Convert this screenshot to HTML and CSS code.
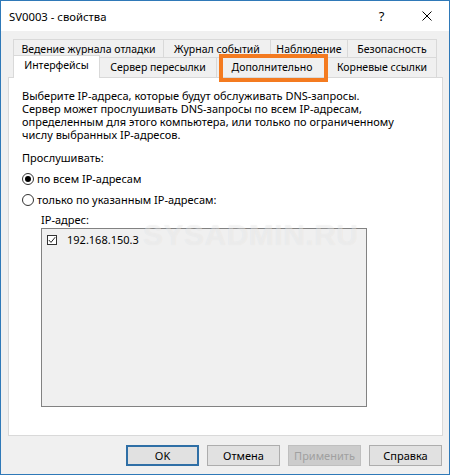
FILE: index.html
```html
<!DOCTYPE html>
<html lang="ru">
<head>
<meta charset="utf-8">
<title>SV0003 - свойства</title>
<link rel="stylesheet" href="styles.css">
</head>
<body>
<div class="window">
  <div class="titlebar">
    <span class="title">SV0003 - свойства</span>
    <span class="tb-btn tb-help">?</span>
    <span class="tb-btn tb-close"><svg width="10" height="10" viewBox="0 0 10 10"><path d="M0.5 0.5 L9.5 9.5 M9.5 0.5 L0.5 9.5" stroke="#000" stroke-width="1" fill="none"/></svg></span>
  </div>
  <div class="body">
    <div class="tabs">
      <div class="tabrow row1">
        <div class="tab t150">Ведение журнала отладки</div>
        <div class="tab t107">Журнал событий</div>
        <div class="tab t77">Наблюдение</div>
        <div class="tab t90 last">Безопасность</div>
      </div>
      <div class="tabrow row2">
        <div class="tab t87 selected">Интерфейсы</div>
        <div class="tab t116">Сервер пересылки</div>
        <div class="tab t111 marked">Дополнительно<span class="highlight"></span></div>
        <div class="tab t110 last">Корневые ссылки</div>
      </div>
    </div>
    <div class="panel">
      <p class="desc">Выберите IP-адреса, которые будут обслуживать DNS-запросы.<br>Сервер может прослушивать DNS-запросы по всем IP-адресам,<br>определенным для этого компьютера, или только по ограниченному<br>числу выбранных IP-адресов.</p>
      <div class="label">Прослушивать:</div>
      <div class="radio"><span class="dot checked"></span><span>по всем IP-адресам</span></div>
      <div class="radio"><span class="dot"></span><span>только по указанным IP-адресам:</span></div>
      <div class="iplabel">IP-адрес:</div>
      <div class="listbox">
        <div class="item"><span class="check"><svg width="8" height="8" viewBox="0 0 8 8"><path d="M0.8 4 L3 6.4 L7.2 1.2" stroke="#222" stroke-width="1" fill="none"/></svg></span><span>192.168.150.3</span></div>
      </div>
      <div class="watermark">SYSADMIN.RU</div>
    </div>
    <div class="buttons">
      <button class="btn default">OK</button>
      <button class="btn">Отмена</button>
      <button class="btn disabled">Применить</button>
      <button class="btn">Справка</button>
    </div>
  </div>
</div>
</body>
</html>
```

FILE: styles.css
```css
* { box-sizing: border-box; }
html, body { margin: 0; padding: 0; background: #fff; }
body {
  font-family: "Noto Sans", "Open Sans", sans-serif;
  font-size: 11px;
  color: #000;
}
.window {
  width: 450px;
  height: 475px;
  border: 1px solid #2f79b8;
  display: flex;
  flex-direction: column;
  background: #f0f0f0;
}
.titlebar {
  height: 30px;
  background: #fff;
  display: flex;
  align-items: center;
  padding-left: 8px;
  flex: none;
}
.title { font-size: 11.3px; flex: 1; }
.tb-btn {
  width: 45px;
  height: 30px;
  display: flex;
  align-items: center;
  justify-content: center;
  font-size: 13px;
}
.body {
  flex: 1;
  padding: 8px 6px 0 7px;
  display: flex;
  flex-direction: column;
}
.tabs { padding-left: 5px; font-size: 10.5px; }
.tabrow { display: flex; }
.tab {
  border: 1px solid #d9d9d9;
  border-bottom: none;
  border-right: none;
  text-align: center;
  padding-top: 2px;
  line-height: 15px;
  white-space: nowrap;
  background: #f0f0f0;
  position: relative;
}
.tab.last { border-right: 1px solid #d9d9d9; }
.row1 .tab { height: 18px; }
.row2 .tab { height: 20px; }
.row2 .tab.selected {
  height: 23px;
  margin-top: -2px;
  margin-bottom: -1px;
  background: #fff;
  z-index: 2;
  border-right: 1px solid #d9d9d9;
}
.row2 .tab.selected + .tab { border-left: none; }
.t150 { width: 150px; }
.t107 { width: 107px; }
.t77 { width: 77px; }
.t90 { width: 90px; }
.t87 { width: 87px; }
.t116 { width: 116px; }
.t111 { width: 111px; }
.t110 { width: 110px; }
.highlight {
  position: absolute;
  left: 2px;
  top: -4px;
  width: 109px;
  height: 28px;
  border: 4px solid #f47b20;
  z-index: 3;
}
.panel {
  position: relative;
  height: 359px;
  background: #fff;
  border: 1px solid #d9d9d9;
  padding: 11px 12px 0 13px;
  flex: none;
}
.desc { margin: 0; line-height: 13px; }
.label { margin-top: 10px; line-height: 13px; }
.radio {
  display: flex;
  align-items: center;
  height: 21px;
  gap: 3px;
}
.label + .radio { margin-top: 4px; }
.dot {
  width: 12px;
  height: 12px;
  border: 1px solid #333;
  border-radius: 50%;
  display: flex;
  align-items: center;
  justify-content: center;
  background: #fff;
}
.dot.checked::after {
  content: "";
  width: 6px;
  height: 6px;
  border-radius: 50%;
  background: #000;
}
.iplabel { margin-top: 3px; margin-left: 19px; line-height: 13px; }
.listbox {
  margin-top: 2px;
  margin-left: 19px;
  width: 326px;
  height: 179px;
  border: 1px solid #828282;
  background: #f0f0f0;
  padding: 4px 5px;
}
.item { display: flex; align-items: center; gap: 10px; line-height: 13px; }
.check {
  width: 10px;
  height: 10px;
  border: 1px solid #333;
  background: #fff;
  display: flex;
  align-items: center;
  justify-content: center;
}
.watermark {
  position: absolute;
  left: 134px;
  top: 140px;
  font-family: "Liberation Sans", sans-serif;
  font-weight: bold;
  font-size: 30px;
  letter-spacing: 0.5px;
  color: rgba(255,255,255,0.4);
  text-shadow: 0 0 1px rgba(0,0,0,0.07);
  pointer-events: none;
}
.buttons {
  display: flex;
  justify-content: flex-end;
  gap: 8px;
  margin-top: 9px;
  padding-right: 1px;
}
.btn {
  width: 73px;
  height: 21px;
  font-family: "Noto Sans", "Open Sans", sans-serif;
  font-size: 11px;
  color: #000;
  background: #e1e1e1;
  border: 1px solid #adadad;
  padding: 0;
}
.btn.default { border: 2px solid #2f6fa6; }
.btn.disabled { color: #a0a0a0; background: #cccccc; border-color: #bfbfbf; }
```
